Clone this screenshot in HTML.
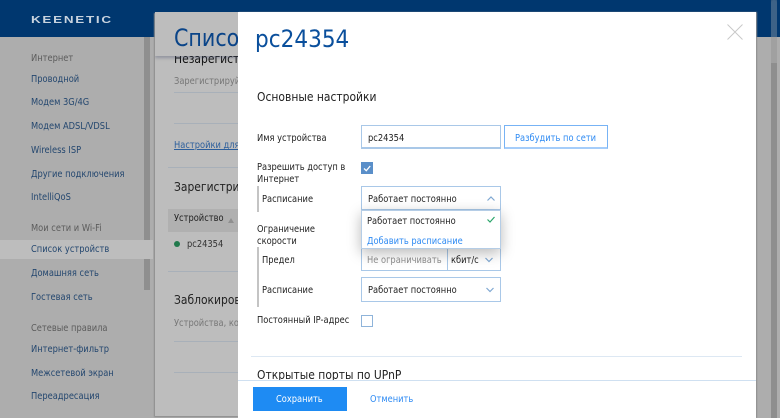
<!DOCTYPE html>
<html><head><meta charset="utf-8">
<style>
html,body{margin:0;padding:0;width:780px;height:418px;overflow:hidden;background:#adadad}
body{position:relative;font-family:"DejaVu Sans","Liberation Sans",sans-serif;font-size:10px;color:#2b2b2b}
.a{position:absolute;white-space:nowrap;line-height:14px;margin-top:1px;transform:scaleX(.83);transform-origin:left top}
.h{font-size:12.5px;transform:scaleX(.86)}
.b{position:absolute;box-sizing:border-box}
.nav{color:#24476f;left:31px}
.cap{color:#5c5c5c;left:31px}
.g{color:#777}
.k{color:#222}
.inp{position:absolute;box-sizing:border-box;background:#fff;border:1px solid #a9c8e8;left:361px;width:140px;height:24px}
</style></head><body>
<div class="b" style="left:0;top:0;width:780px;height:37px;background:#00376f"></div>
<div class="a" style="left:31px;top:12px;color:#c8d3df;font-family:'Liberation Sans',sans-serif;font-size:10.5px;font-weight:bold;letter-spacing:1.35px;transform:scaleX(1.28)">KEENETIC</div>

<div class="b" style="left:144px;top:37px;width:6px;height:253px;background:#8f8f8f"></div>
<div class="b" style="left:0;top:240px;width:153px;height:19px;background:#bdbdbd"></div>

<div class="a cap" style="top:51px">Интернет</div>
<div class="a nav" style="top:72px">Проводной</div>
<div class="a nav" style="top:95px">Модем 3G/4G</div>
<div class="a nav" style="top:119px">Модем ADSL/VDSL</div>
<div class="a nav" style="top:143px">Wireless ISP</div>
<div class="a nav" style="top:167px">Другие подключения</div>
<div class="a nav" style="top:190px">IntelliQoS</div>
<div class="a cap" style="top:221px">Мои сети и Wi-Fi</div>
<div class="a nav" style="top:242px">Список устройств</div>
<div class="a nav" style="top:266px">Домашняя сеть</div>
<div class="a nav" style="top:290px">Гостевая сеть</div>
<div class="a cap" style="top:321px">Сетевые правила</div>
<div class="a nav" style="top:342px">Интернет-фильтр</div>
<div class="a nav" style="top:366px">Межсетевой экран</div>
<div class="a nav" style="top:389px">Переадресация</div>

<div class="b" style="left:155px;top:12px;width:84px;height:404px;background:#bdbdbd;box-shadow:-1px 1px 1px #8d8d8d;overflow:hidden">
  <div class="a k h" style="left:19px;top:39px;color:#111">Незарегистрированные</div>
  <div class="b" style="left:0;top:0;width:84px;height:44px;background:#bdbdbd;box-shadow:0 2px 3px rgba(60,70,100,.35)"></div>
  <div class="a" style="left:19px;top:10px;font-size:24px;line-height:30px;color:#0a4488;transform:scaleX(.86)">Список устройств</div>
  <div class="a g" style="left:19px;top:62px">Зарегистрируйте</div>
  <div class="b" style="left:19px;top:80px;width:65px;height:1px;background:#a8b0b9"></div>
  <div class="b" style="left:19px;top:111px;width:65px;height:1px;background:#a8b0b9"></div>
  <div class="a" style="left:19px;top:126px;color:#2d5f9c;text-decoration:underline">Настройки для</div>
  <div class="b" style="left:13px;top:155px;width:71px;height:1px;background:#a8b0b9"></div>
  <div class="a k h" style="left:19px;top:167px">Зарегистрированные</div>
  <div class="b" style="left:13px;top:197px;width:71px;height:23px;background:#b0b0b0"></div>
  <div class="a k" style="left:19px;top:199px">Устройство</div>
  <div class="b" style="left:73px;top:206px;width:0;height:0;border:3.5px solid transparent;border-top:0;border-bottom:5px solid #8f8f8f"></div>
  <div class="b" style="left:19px;top:229px;width:6px;height:6px;border-radius:50%;background:#21794c"></div>
  <div class="a" style="left:32px;top:225px;color:#333">pc24354</div>
  <div class="b" style="left:13px;top:259px;width:71px;height:1px;background:#a8b0b9"></div>
  <div class="a k h" style="left:19px;top:280px">Заблокированные</div>
  <div class="a g" style="left:19px;top:304px">Устройства, которые</div>
  <div class="b" style="left:19px;top:329px;width:65px;height:1px;background:#a8b0b9"></div>
  <div class="b" style="left:19px;top:360px;width:65px;height:1px;background:#a8b0b9"></div>
</div>

<div class="b" style="left:771px;top:0;width:9px;height:63px;background:#33597f"></div>
<div class="b" style="left:771px;top:37px;width:6px;height:26px;background:#a0a0a0"></div>
<div class="b" style="left:771px;top:63px;width:6px;height:355px;background:#8e8e8e"></div>
<div class="b" style="left:771px;top:0;width:6px;height:37px;background:#3d6287;border-radius:3px 3px 0 0"></div>
<div class="b" style="left:777px;top:0;width:3px;height:37px;background:#00376f"></div>
<div class="b" style="left:777px;top:37px;width:3px;height:381px;background:#adadad"></div>

<div class="b" style="left:238px;top:12px;width:518px;height:406px;background:#fff;box-shadow:1px 0 1px #8f8f8f"></div>

<div class="a" style="left:255px;top:23px;font-size:24px;line-height:30px;color:#0a4f9c;transform:scaleX(.9)">pc24354</div>
<svg class="b" style="left:727px;top:24px" width="16" height="16"><path d="M0.5 0.5L15.5 15.5M15.5 0.5L0.5 15.5" stroke="#c9c9c9" stroke-width="1" fill="none"/></svg>

<div class="a k h" style="left:257px;top:89px">Основные настройки</div>

<div class="a k" style="left:257px;top:131px">Имя устройства</div>
<div class="inp" style="top:125px;height:24px;border-bottom:2px solid #a9c8e8"></div>
<div class="a k" style="left:368px;top:131px">pc24354</div>
<div class="b" style="left:504px;top:125px;width:104px;height:24px;background:#fff;border:1px solid #77b3f5;border-bottom:2px solid #a5cdfa"></div>
<div class="a" style="left:515px;top:131px;color:#2f8bf3">Разбудить по сети</div>

<div class="a k" style="left:257px;top:161px;line-height:12px">Разрешить доступ в<br>Интернет</div>
<div class="b" style="left:361px;top:162px;width:12px;height:12px;background:#5a8fc9"></div>
<svg class="b" style="left:361px;top:162px" width="12" height="12"><path d="M3 6.5L5.3 8.7L9.2 4" stroke="#fff" stroke-width="1.3" fill="none"/></svg>

<div class="b" style="left:257px;top:186px;width:2px;height:26px;background:#c4c4c4"></div>
<div class="a k" style="left:262px;top:192px">Расписание</div>
<div class="inp" style="top:186px"></div>
<div class="a k" style="left:368px;top:192px">Работает постоянно</div>
<svg class="b" style="left:486px;top:195px" width="10" height="8"><path d="M1.5 5.5L5 2L8.5 5.5" stroke="#7fa8d2" stroke-width="1.2" fill="none"/></svg>

<div class="a k" style="left:257px;top:223px;line-height:12px">Ограничение<br>скорости</div>
<div class="b" style="left:257px;top:247px;width:2px;height:60px;background:#c4c4c4"></div>
<div class="a k" style="left:262px;top:253px">Предел</div>
<div class="inp" style="top:247px"></div>
<div class="a" style="left:367px;top:253px;color:#8f8f8f">Не ограничивать</div>
<div class="b" style="left:447px;top:248px;width:1px;height:22px;background:#a9c8e8"></div>
<div class="a k" style="left:451px;top:253px">кбит/с</div>
<svg class="b" style="left:484px;top:256px" width="10" height="8"><path d="M1.5 2L5 5.5L8.5 2" stroke="#7fa8d2" stroke-width="1.2" fill="none"/></svg>

<div class="a k" style="left:262px;top:283px">Расписание</div>
<div class="inp" style="top:277px;height:25px"></div>
<div class="a k" style="left:368px;top:283px">Работает постоянно</div>
<svg class="b" style="left:485px;top:286px" width="10" height="8"><path d="M1.5 2L5 5.5L8.5 2" stroke="#7fa8d2" stroke-width="1.2" fill="none"/></svg>

<div class="a k" style="left:257px;top:313px">Постоянный IP-адрес</div>
<div class="b" style="left:361px;top:315px;width:12px;height:12px;border:1px solid #8fb4da;background:#fff"></div>

<div class="b" style="left:361px;top:210px;width:140px;height:39px;background:#fff;border:1px solid #b5cde6;box-shadow:0 4px 14px rgba(0,0,0,.28)"></div>
<div class="a k" style="left:367px;top:214px">Работает постоянно</div>
<svg class="b" style="left:486px;top:215px" width="10" height="9"><path d="M1.5 4.5L4 7L8.5 2" stroke="#2aa56a" stroke-width="1.2" fill="none"/></svg>
<div class="a" style="left:367px;top:234px;color:#2f8bf3">Добавить расписание</div>

<div class="b" style="left:251px;top:356px;width:491px;height:1px;background:#dde8f3"></div>
<div class="b" style="left:238px;top:366px;width:518px;height:52px;overflow:hidden">
  <div class="a k h" style="left:19px;top:1px">Открытые порты по UPnP</div>
</div>
<div class="b" style="left:238px;top:380px;width:518px;height:38px;background:#fff;border-top:1px solid #cfe0f1"></div>
<div class="b" style="left:253px;top:387px;width:94px;height:24px;background:#1e8bf3"></div>
<div class="a" style="left:276px;top:392px;color:#fff">Сохранить</div>
<div class="a" style="left:370px;top:392px;color:#2f8bf3">Отменить</div>
</body></html>
